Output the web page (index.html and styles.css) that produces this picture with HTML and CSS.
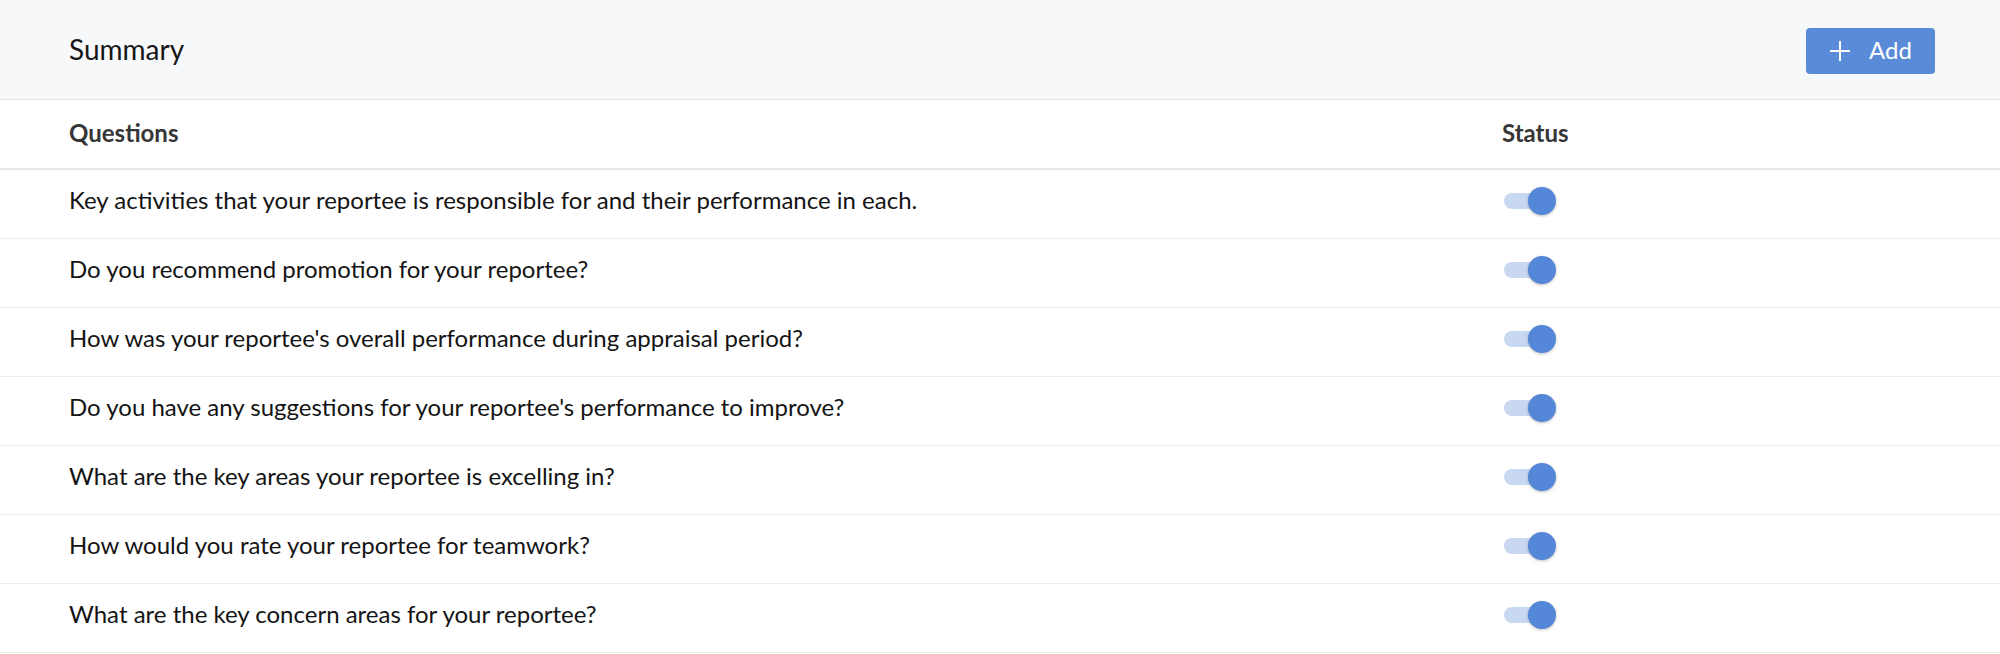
FILE: index.html
```html
<!DOCTYPE html>
<html>
<head>
<meta charset="utf-8">
<link rel="stylesheet" href="styles.css">
</head>
<body>
<div class="header">
  <div class="title">Summary</div>
  <button class="add-btn"><svg class="plus" viewBox="0 0 20 20" width="20" height="20"><path d="M10 0v20M0 10h20" stroke="#fff" stroke-width="2" fill="none"/></svg><span>Add</span></button>
</div>
<div class="table">
  <div class="row head">
    <div class="q">Questions</div>
    <div class="s">Status</div>
  </div>
  <div class="row"><div class="q">Key activities that your reportee is responsible for and their performance in each.</div><div class="s"><span class="toggle"><span class="knob"></span></span></div></div>
  <div class="row"><div class="q">Do you recommend promotion for your reportee?</div><div class="s"><span class="toggle"><span class="knob"></span></span></div></div>
  <div class="row"><div class="q">How was your reportee's overall performance during appraisal period?</div><div class="s"><span class="toggle"><span class="knob"></span></span></div></div>
  <div class="row"><div class="q">Do you have any suggestions for your reportee's performance to improve?</div><div class="s"><span class="toggle"><span class="knob"></span></span></div></div>
  <div class="row"><div class="q">What are the key areas your reportee is excelling in?</div><div class="s"><span class="toggle"><span class="knob"></span></span></div></div>
  <div class="row"><div class="q">How would you rate your reportee for teamwork?</div><div class="s"><span class="toggle"><span class="knob"></span></span></div></div>
  <div class="row"><div class="q">What are the key concern areas for your reportee?</div><div class="s"><span class="toggle"><span class="knob"></span></span></div></div>
</div>
</body>
</html>
```
FILE: styles.css
```css
html, body {
  margin: 0;
  padding: 0;
  background: #fff;
  font-family: Lato, "Open Sans", sans-serif;
  color: #1f1f1f;
}
.header {
  height: 99px;
  background: #f7f8fa;
  border-bottom: 1px solid #e3e5e9;
  display: flex;
  align-items: center;
  justify-content: space-between;
  padding: 0 65px 0 69px;
}
.title {
  font-size: 28px;
  color: #161616;
  margin-top: -2px;
}
.add-btn {
  width: 129px;
  height: 46px;
  background: #5a8bd8;
  border: none;
  border-radius: 4px;
  color: #fff;
  font-family: Lato, sans-serif;
  font-size: 24px;
  display: flex;
  align-items: center;
  justify-content: flex-start;
  gap: 19px;
  padding: 0 0 0 24px;
  margin-top: 2px;
}
.add-btn span {
  margin-top: -2px;
}
.table {
  display: flex;
  flex-direction: column;
}
.row {
  height: 68px;
  border-bottom: 1px solid #ececec;
  display: grid;
  grid-template-columns: 1433px 1fr;
  align-items: center;
  padding-left: 69px;
  font-size: 24px;
  color: #141414;
}
.row.head {
  height: 68px;
  border-bottom: 2px solid #e8e8e8;
  font-weight: bold;
  color: #363636;
  font-size: 24px;
}
.q {
  margin-top: -9px;
}
.head .q, .head .s {
  margin-top: -3px;
}
.toggle {
  position: relative;
  display: block;
  width: 48px;
  height: 16px;
  border-radius: 8px;
  background: #c9d8f1;
  margin-left: 2px;
  margin-top: -6px;
}
.knob {
  position: absolute;
  left: 24px;
  top: -6px;
  width: 28px;
  height: 28px;
  border-radius: 50%;
  background: #5487d7;
  box-shadow: 0 1px 3px rgba(0,0,0,0.25);
}
```
